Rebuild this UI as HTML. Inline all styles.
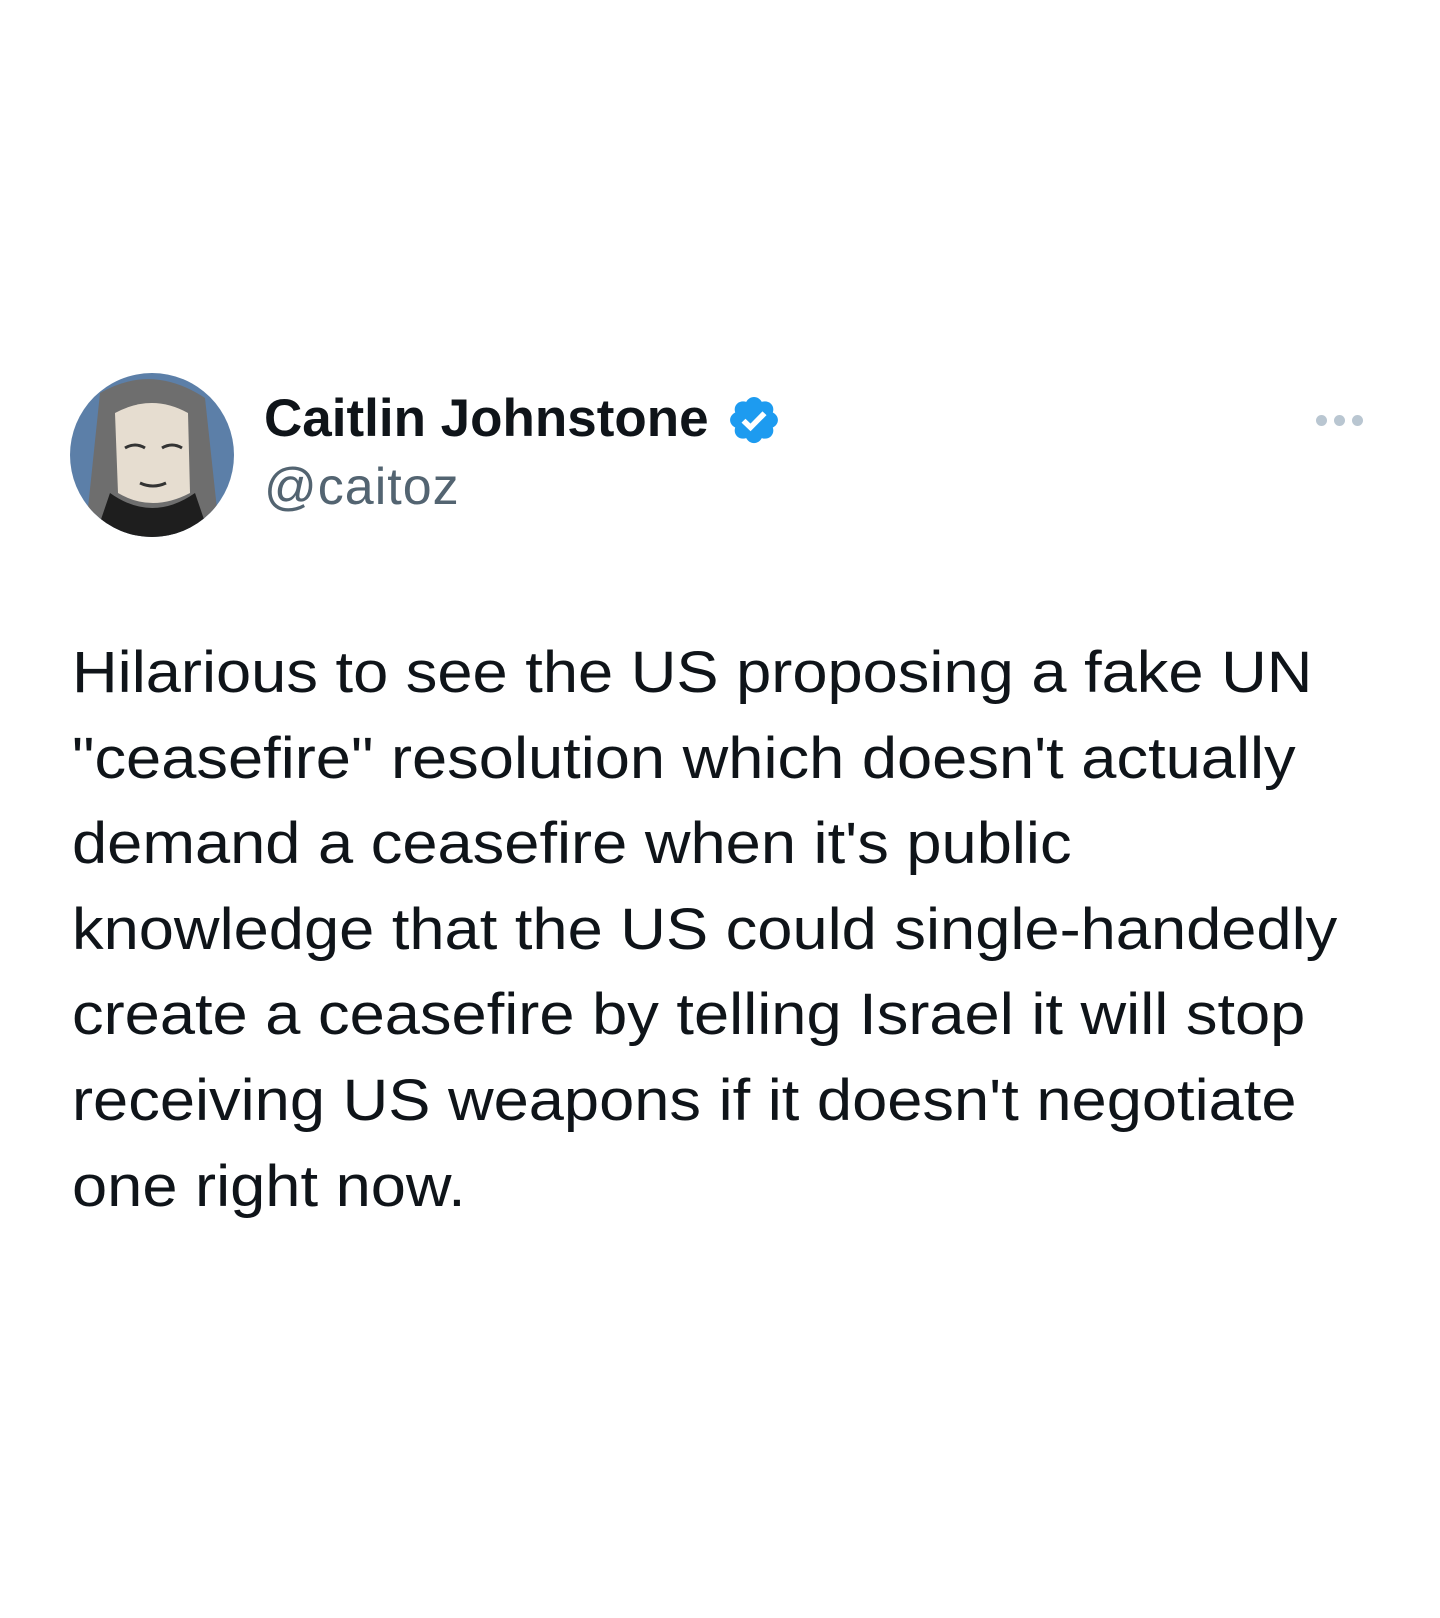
<!DOCTYPE html>
<html><head><meta charset="utf-8"><style>
html,body{margin:0;padding:0;background:#fff;width:1440px;height:1618px;overflow:hidden}
body{position:relative;font-family:"Liberation Sans",sans-serif;color:#0f1419}
.l{position:absolute;left:72px;font-size:58px;white-space:nowrap;letter-spacing:0;line-height:1;transform:scaleX(1.09);transform-origin:0 0}
.name{position:absolute;left:264px;top:392px;font-size:53px;font-weight:bold;letter-spacing:0;white-space:nowrap;line-height:1}
.handle{position:absolute;left:264px;top:461px;font-size:52px;color:#536471;letter-spacing:1px;line-height:1}
.dot{position:absolute;top:414.5px;width:11px;height:11px;border-radius:50%;background:#b9c6d1}
</style></head><body>
<svg style="position:absolute;left:70px;top:373px" width="164" height="164" viewBox="0 0 164 164">
<defs><clipPath id="c"><circle cx="82" cy="82" r="82"/></clipPath></defs>
<g clip-path="url(#c)">
<rect width="164" height="164" fill="#5c7fa8"/>
<path d="M30 20 Q82 -10 135 25 L150 164 L15 164 Z" fill="#6e6e6e"/>
<path d="M45 40 Q82 20 118 40 L120 120 Q82 140 48 120 Z" fill="#e6ddd0"/>
<path d="M40 120 Q82 150 125 120 L140 164 L25 164 Z" fill="#1e1e1e"/>
<path d="M55 75 q10 -6 20 0 M92 75 q10 -6 20 0 M70 110 q13 6 26 0" stroke="#333" stroke-width="3" fill="none"/>
</g></svg>
<div class="name">Caitlin Johnstone</div>
<svg style="position:absolute;left:726px;top:393px" width="56" height="54" viewBox="0 0 24 24" preserveAspectRatio="none"><path fill="#1d9bf0" d="M22.25 12c0-1.43-.88-2.670-2.19-3.34.46-1.39.2-2.9-.81-3.910s-2.52-1.27-3.91-.81c-.66-1.310-1.910-2.19-3.340-2.19s-2.67.88-3.33 2.19c-1.4-.46-2.910-.2-3.920.81s-1.26 2.52-.8 3.91c-1.31.67-2.2 1.91-2.2 3.34s.89 2.67 2.2 3.34c-.46 1.39-.21 2.9.8 3.91s2.52 1.26 3.91.81c.67 1.31 1.91 2.19 3.34 2.19s2.68-.88 3.34-2.19c1.39.45 2.9.2 3.91-.81s1.27-2.52.81-3.91c1.31-.67 2.19-1.91 2.19-3.34z"/><path d="M7.5 12.3l3 3 6-6.3" stroke="#fff" stroke-width="2.4" fill="none"/></svg>
<div class="handle">@caitoz</div>
<div class="dot" style="left:1315.5px"></div>
<div class="dot" style="left:1333.5px"></div>
<div class="dot" style="left:1351.5px"></div>
<div class="l" style="top:644px">Hilarious to see the US proposing a fake UN</div>
<div class="l" style="top:729.6px">"ceasefire" resolution which doesn't actually</div>
<div class="l" style="top:815.2px">demand a ceasefire when it's public</div>
<div class="l" style="top:900.8px">knowledge that the US could single-handedly</div>
<div class="l" style="top:986.4px">create a ceasefire by telling Israel it will stop</div>
<div class="l" style="top:1072px">receiving US weapons if it doesn't negotiate</div>
<div class="l" style="top:1157.6px">one right now.</div>
</body></html>
